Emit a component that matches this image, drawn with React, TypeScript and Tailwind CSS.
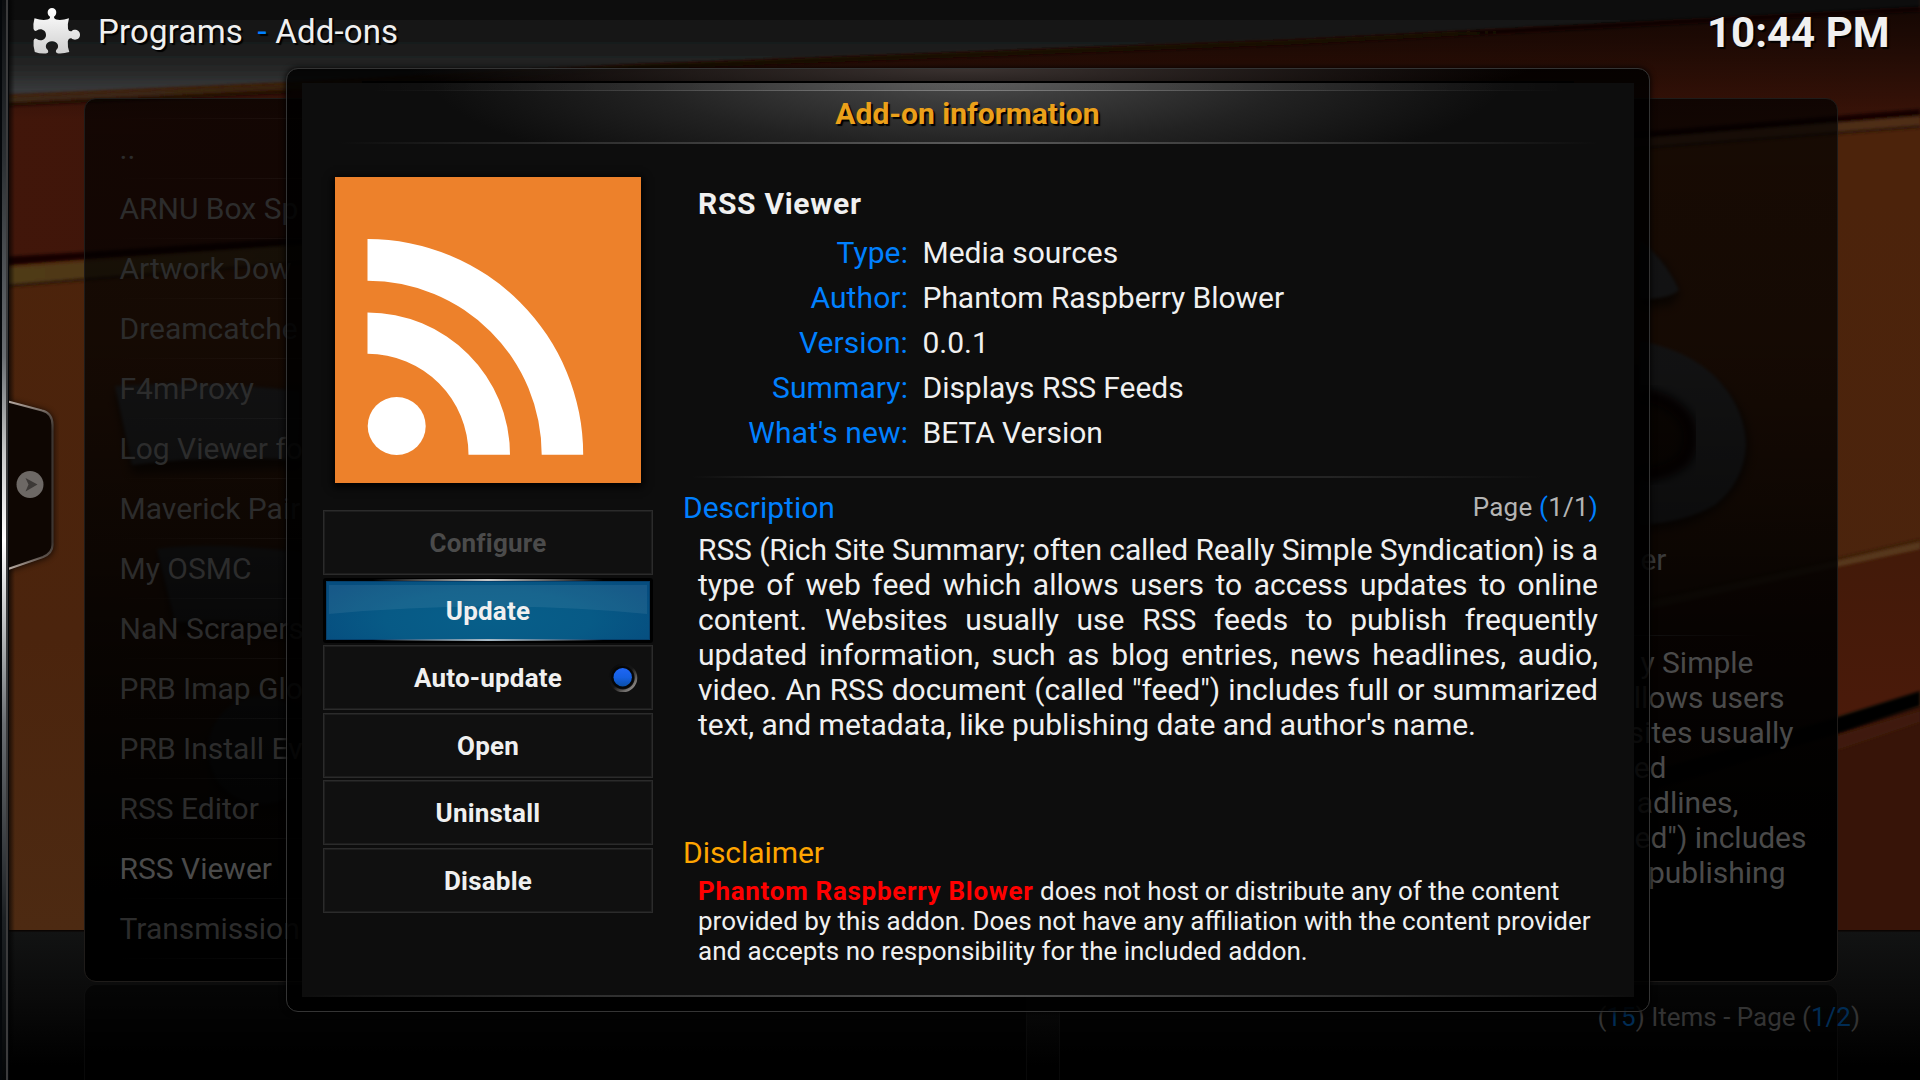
import React from "react";

const addons = [
  "..",
  "ARNU Box Sp",
  "Artwork Dow",
  "Dreamcatche",
  "F4mProxy",
  "Log Viewer fo",
  "Maverick Pair",
  "My OSMC",
  "NaN Scrapers",
  "PRB Imap Glo",
  "PRB Install Ev",
  "RSS Editor",
  "RSS Viewer",
  "Transmission",
];

/* Tail of each synopsis line, with the width of the line up to its last letter. */
const synopsis: [string, string][] = [
  ["y Simple", "w-[694px]"],
  ["llows users", "w-[725px]"],
  ["sites usually", "w-[734px]"],
  ["ed", "w-[607px]"],
  ["adlines,", "w-[679px]"],
  ['ed") includes', "w-[747px]"],
  ["publishing", "w-[726px]"],
];

const fields: [string, string][] = [
  ["Type:", "Media sources"],
  ["Author:", "Phantom Raspberry Blower"],
  ["Version:", "0.0.1"],
  ["Summary:", "Displays RSS Feeds"],
  ["What's new:", "BETA Version"],
];

const description = [
  "RSS (Rich Site Summary; often called Really Simple Syndication) is a",
  "type of web feed which allows users to access updates to online",
  "content. Websites usually use RSS feeds to publish frequently",
  "updated information, such as blog entries, news headlines, audio,",
  'video. An RSS document (called "feed") includes full or summarized',
];

function Wallpaper() {
  return (
    <svg className="absolute inset-0" width="1920" height="1080" viewBox="0 0 1920 1080">
      <defs>
        <linearGradient id="steel" x1="0" y1="0" x2="0" y2="100" gradientUnits="userSpaceOnUse">
          <stop offset="0" stopColor="#0b0b0b" />
          <stop offset="0.35" stopColor="#161616" />
          <stop offset="0.6" stopColor="#202121" />
          <stop offset="0.75" stopColor="#2a2b2b" />
          <stop offset="0.9" stopColor="#37383a" />
          <stop offset="1" stopColor="#2a2c2f" />
        </linearGradient>
        <linearGradient id="redL" x1="0" y1="0" x2="1" y2="0">
          <stop offset="0" stopColor="#41160a" />
          <stop offset="0.65" stopColor="#371207" />
          <stop offset="1" stopColor="#3a1308" />
        </linearGradient>
        <linearGradient id="gold" x1="0" y1="0" x2="1" y2="0">
          <stop offset="0" stopColor="#503a17" />
          <stop offset="0.3" stopColor="#4c3014" />
          <stop offset="0.8" stopColor="#4a2b13" />
          <stop offset="1" stopColor="#4f2d15" />
        </linearGradient>
        <linearGradient id="rim" x1="0" y1="0" x2="1920" y2="0" gradientUnits="userSpaceOnUse">
          <stop offset="0" stopColor="#3b2915" />
          <stop offset="0.15" stopColor="#38230f" />
          <stop offset="0.36" stopColor="#140903" />
          <stop offset="1" stopColor="#100502" />
        </linearGradient>
        <linearGradient id="shade" x1="0" y1="0" x2="0" y2="120" gradientUnits="userSpaceOnUse">
          <stop offset="0" stopColor="#000" stopOpacity="0.85" />
          <stop offset="0.35" stopColor="#000" stopOpacity="0.6" />
          <stop offset="1" stopColor="#000" stopOpacity="0" />
        </linearGradient>
        <linearGradient id="wood" x1="0" y1="200" x2="0" y2="930" gradientUnits="userSpaceOnUse">
          <stop offset="0" stopColor="#4c230b" />
          <stop offset="0.6" stopColor="#4b240d" />
          <stop offset="1" stopColor="#4d2a12" />
        </linearGradient>
        <linearGradient id="redR" x1="0" y1="560" x2="0" y2="720" gradientUnits="userSpaceOnUse">
          <stop offset="0" stopColor="#431a09" />
          <stop offset="1" stopColor="#4a1a0a" />
        </linearGradient>
        <linearGradient id="floor" x1="0" y1="0" x2="0" y2="1">
          <stop offset="0" stopColor="#121313" />
          <stop offset="0.45" stopColor="#0a0a0a" />
          <stop offset="0.9" stopColor="#000" />
        </linearGradient>
        <filter id="soft"><feGaussianBlur stdDeviation="1.6" /></filter>
        <filter id="softer"><feGaussianBlur stdDeviation="4" /></filter>
      </defs>
      <rect width="1920" height="1080" fill="url(#wood)" />
      <polygon points="0,102 290,87 640,66 1280,43 1920,10 1920,118 1650,138 290,246 0,264" fill="url(#redL)" />
      <g filter="url(#soft)">
        <polygon points="0,257 84,252 290,238 1650,131 1920,109 1920,116 1650,138 290,246 84,259 0,266" fill="#140200" />
        <polygon points="0,268 84,262 290,246 1650,138 1920,116 1920,126 1650,147 290,262 84,278 0,286" fill="url(#gold)" />
        <polygon points="0,285 84,278 290,262 1650,146 1920,125 1920,128 1650,149 290,265 84,281 0,288" fill="#2b1507" />
      </g>
      <rect y="0" width="1920" height="120" fill="url(#shade)" opacity="0.8" />
      <polygon points="0,-10 1920,-10 1920,8 1280,40 640,64 290,82 0,95" fill="url(#steel)" filter="url(#soft)" />
      <g filter="url(#soft)" fill="none">
        <path d="M0 100 L290 87 L640 67 L1280 43 L1920 9" stroke="url(#rim)" strokeWidth="5" />
        <path d="M0 105 L290 92" stroke="#1a0804" strokeWidth="3" />
      </g>
      {/* right-hand plank edges */}
      <polygon points="1600,618 1837,566 1920,549 1920,692 1837,716 1600,790" fill="url(#redR)" />
      <polygon points="1600,800 1837,730 1920,706 1920,940 1600,940" fill="#371408" />
      <g filter="url(#soft)">
        <polygon points="1600,612 1837,561 1920,542 1920,549 1837,567 1600,620" fill="#57381c" />
        <path d="M1600 610 L1837 559 L1920 540" stroke="#2e1606" strokeWidth="1.5" fill="none" />
        <polygon points="1600,786 1837,717 1920,691 1920,706 1837,734 1600,806" fill="#020000" />
        <polygon points="1837,736 1920,711 1920,722 1837,750" fill="#45200c" opacity="0.7" />
      </g>
      {/* embossed metal letters */}
      <g filter="url(#softer)" fill="#000" opacity="0.55">
        <path d="M115 392 L165 388 L300 392 L300 468 L132 474 Z" />
        <path d="M158 554 L300 552 L300 640 L176 634 Z" />
        <circle cx="263" cy="758" r="56" />
        <ellipse cx="1652" cy="446" rx="97" ry="84" />
        <path d="M1640 250 L1664 262 L1680 294 L1670 306 L1640 308 Z" />
      </g>
      <g fill="#3f4042" filter="url(#soft)">
        <path d="M115 386 Q200 380 300 391 L300 460 Q210 454 132 465 Z" />
        <path d="M157 549 Q210 542 300 552 L300 626 Q235 618 175 622 Z" />
        <circle cx="262" cy="750" r="54" />
        <path d="M1640 240 L1651 250 Q1668 266 1679 290 Q1670 299 1640 299 Z" />
        <path fillRule="evenodd" d="M1640 341 Q1700 352 1728 392 Q1745 416 1746 445 Q1744 482 1715 505 Q1686 522 1640 525 Z M1640 394 Q1672 398 1687 420 Q1696 442 1684 460 Q1668 474 1640 476 Z" />
      </g>
      <path d="M1640 394 Q1672 398 1687 420 Q1696 442 1684 460 Q1668 474 1640 476" fill="none" stroke="#080401" strokeWidth="14" filter="url(#softer)" />
      <rect y="931" width="1920" height="149" fill="url(#floor)" />
      <rect y="930" width="1920" height="1.5" fill="#0a0503" />
    </svg>
  );
}

function SideHandle() {
  return (
    <svg className="absolute left-0 top-0" width="90" height="1080" viewBox="0 0 90 1080">
      <defs>
        <linearGradient id="chrome" x1="0" y1="0" x2="0" y2="1">
          <stop offset="0" stopColor="#0b0d0f" />
          <stop offset="0.15" stopColor="#2c3033" />
          <stop offset="0.33" stopColor="#6a6e72" />
          <stop offset="0.42" stopColor="#c8caca" />
          <stop offset="0.5" stopColor="#fff" />
          <stop offset="0.57" stopColor="#c4c6c8" />
          <stop offset="0.67" stopColor="#6a6e72" />
          <stop offset="0.85" stopColor="#1c2023" />
          <stop offset="1" stopColor="#040607" />
        </linearGradient>
        <linearGradient id="edge" x1="0" y1="401" x2="0" y2="569" gradientUnits="userSpaceOnUse">
          <stop offset="0" stopColor="#b9aca4" />
          <stop offset="0.08" stopColor="#5d534d" />
          <stop offset="0.18" stopColor="#3c3531" />
          <stop offset="0.84" stopColor="#3c3531" />
          <stop offset="0.93" stopColor="#5d534d" />
          <stop offset="1" stopColor="#b9aca4" />
        </linearGradient>
        <linearGradient id="castX" x1="0" y1="0" x2="1" y2="0">
          <stop offset="0" stopColor="#000" stopOpacity="0.75" />
          <stop offset="1" stopColor="#000" stopOpacity="0" />
        </linearGradient>
        <filter id="cast"><feGaussianBlur stdDeviation="3" /></filter>
      </defs>
      <rect x="8" width="7" height="1080" fill="url(#castX)" />
      <path d="M8 401 L43 410 Q54 413 54 425 V546 Q54 555 44 559 L8 571 Z" fill="#000" opacity="0.7" filter="url(#cast)" />
      <path d="M8 401.5 L42 410.5 Q52.5 413 52.5 425 V545 Q52.5 553 43 557 L8 569" fill="#0e0602" stroke="url(#edge)" strokeWidth="2.2" />
      <circle cx="30" cy="484.5" r="13.5" fill="#6d6865" />
      <path d="M25.5 478 L37.5 484.5 L25.5 491.5 L28.5 484.5 Z" fill="#3d3937" />
      <rect width="9" height="1080" fill="#04070a" />
      <rect x="2" width="4" height="1080" fill="url(#chrome)" />
      <rect x="6" width="2" height="1080" fill="#3b3b3c" />
    </svg>
  );
}

function PuzzleIcon() {
  return (
    <svg width="50" height="50" viewBox="32 6 50 50">
      <defs>
        <linearGradient id="puzzle" x1="0" y1="0" x2="0" y2="1">
          <stop offset="0" stopColor="#fff" />
          <stop offset="1" stopColor="#cfcfcf" />
        </linearGradient>
      </defs>
      <path
        fill="url(#puzzle)"
        d="M34.5 18.3 Q42 20.8 47.5 19.6 Q50.8 18.7 49.8 16.6 C46.2 14 47.4 8 52 8 C56.6 8 57.8 14 54.2 16.6 Q53.4 18.8 56.4 19.6 Q62 20.6 69 18.2 Q67.3 24 68 28.8 Q68.8 32 71.6 31.2 C74 28.4 80 29.8 80 34.7 C80 39.6 74.2 41 71.4 38.2 Q68.6 37.8 67.8 41.4 Q67.4 46.6 69.3 52 Q63.5 53.8 58.2 53.4 Q55 53 56.2 50 C60 47 58 41.2 52 41.2 C46 41.2 44 47 47.8 50 Q49.2 53 46 53.5 Q40 54 34.8 52 Q33 46.6 33.6 40.6 Q34.4 37.4 36.8 39 C40.6 42 46 39.4 46 34.9 C46 30.2 40.6 27.6 36.8 30.6 Q34 31.8 33.5 28.8 Q33 23.6 34.5 18.3 Z"
      />
    </svg>
  );
}

function RssLogo() {
  return (
    <svg className="mx-auto block shadow-[0_2px_8px_2px_#000]" width="306" height="306" viewBox="335 177 306 306">
      <rect x="335" y="177" width="306" height="306" fill="#ed812b" />
      <circle cx="396.7" cy="426" r="29" fill="#fff" />
      <path d="M367.5 312.5 A142.5 142.2 0 0 1 510 454.7 H468.5 A101 101 0 0 0 367.5 353.7 Z" fill="#fff" />
      <path d="M367.5 239 A215.7 215.7 0 0 1 583.2 454.7 H541.7 A174.2 174 0 0 0 367.5 280.7 Z" fill="#fff" />
    </svg>
  );
}

function Toggle() {
  return (
    <svg className="absolute right-[14px] top-[17px]" width="32" height="32" viewBox="0 0 32 32">
      <defs>
        <linearGradient id="ring" x1="0.1" y1="0.1" x2="0.9" y2="0.9">
          <stop offset="0" stopColor="#0b0b0b" />
          <stop offset="0.5" stopColor="#161616" />
          <stop offset="0.85" stopColor="#6d6a68" />
          <stop offset="1" stopColor="#8d8a88" />
        </linearGradient>
        <linearGradient id="bulb" x1="0" y1="0" x2="0" y2="1">
          <stop offset="0" stopColor="#1f66f5" />
          <stop offset="0.5" stopColor="#1560e2" />
          <stop offset="1" stopColor="#0b4fa6" />
        </linearGradient>
      </defs>
      <circle cx="16" cy="15.8" r="13" fill="none" stroke="url(#ring)" strokeWidth="2.6" />
      <circle cx="15.5" cy="15.3" r="11.3" fill="#050607" />
      <circle cx="15.7" cy="15.3" r="9.2" fill="url(#bulb)" />
    </svg>
  );
}

const buttonText = "text-[26px] font-bold leading-[67px] tracking-[0.2px] text-center";

function PlainButton({ label, disabled, children }: { label: string; disabled?: boolean; children?: React.ReactNode }) {
  return (
    <div className={`relative h-[65px] bg-[#101010] shadow-[inset_0_0_0_1px_#2b2b2b,inset_0_0_0_2px_#1d1d1d] ${buttonText} ${disabled ? "text-[#4b4b4b]" : "text-[#f0f0f0]"}`}>
      {label}
      {children}
    </div>
  );
}

function FocusedButton({ label }: { label: string }) {
  return (
    <div className={`relative h-[65px] rounded-[3px] bg-black text-[#f0f0f0] ${buttonText}`}>
      <div className="absolute inset-x-[3px] bottom-[3px] top-[3px] overflow-hidden bg-[radial-gradient(ellipse_58%_90%_at_50%_65%,#075f8a_0%,#075a86_55%,#064d7f_100%)] shadow-[inset_0_0_0_1px_#063f6b]">
        <svg className="block" width="324" height="59" viewBox="0 0 324 59" preserveAspectRatio="none">
          <path d="M3 4 H321 V33 Q162 18 3 33 Z" fill="#fff" opacity="0.07" />
        </svg>
      </div>
      <div className="absolute inset-x-[50px] top-px h-[2px] bg-[linear-gradient(90deg,transparent,#c9c9c9_50%,transparent)]" />
      <div className="absolute inset-x-[50px] bottom-[2px] h-[2px] bg-[linear-gradient(90deg,transparent,#a9bcc9_50%,transparent)]" />
      <span className="relative">{label}</span>
    </div>
  );
}

function Backdrop() {
  return (
    <div className="absolute inset-0 flex flex-col">
      <header className="flex h-[98px] shrink-0 justify-between pl-[32px] pr-[30.5px] text-[#f0f0f0] [text-shadow:2px_2px_1px_#000]">
        <div className="flex text-[33px] leading-[63px]">
          <div className="mr-[16px] pt-[6px]"><PuzzleIcon /></div>
          <span className="tracking-[0.2px]">Programs</span>
          <span className="ml-[14.5px] text-[#0080ff]">-</span>
          <span className="ml-[8.5px] tracking-[0.15px]">Add-ons</span>
        </div>
        <div className="text-[42px] font-bold leading-[65px]">10:44 PM</div>
      </header>

      <main className="flex h-[884px] shrink-0 gap-[32px] pl-[83.5px] pr-[82.5px]">
        <section className="w-[943px] overflow-hidden rounded-[12px] border border-[#1f1c1a] bg-[linear-gradient(180deg,rgba(0,0,0,0.69)_0%,rgba(0,0,0,0.73)_30%,rgba(0,0,0,0.8)_45%,rgba(0,0,0,0.88)_60%,#000_90%)] pt-[19px] text-[30px] leading-[61px]">
          {addons.map((name) => (
            <div key={name} className={`relative h-[60px] whitespace-nowrap pl-[35px] ${name === "RSS Viewer" ? "text-[#4a4a4a]" : "text-[#2c2c2c]"}`}>
              <div className="absolute inset-x-0 top-0 h-px bg-[linear-gradient(90deg,transparent_3%,rgba(255,255,255,0.04)_22%,transparent)]" />
              {name}
            </div>
          ))}
          <div className="h-px bg-[linear-gradient(90deg,transparent_3%,rgba(255,255,255,0.04)_22%,transparent)]" />
        </section>
        <section className="flex w-[779px] flex-col overflow-hidden rounded-[12px] border border-[#1f1c1a] bg-[linear-gradient(180deg,rgba(0,0,0,0.69)_0%,rgba(0,0,0,0.73)_30%,rgba(0,0,0,0.8)_45%,rgba(0,0,0,0.9)_60%,#000_85%)] pt-[442px] text-[30px] text-[#4a4a4a]">
          <div className="w-[607px] text-right leading-[38px] text-[#3a3a3a]">er</div>
          <div className="mt-[56px] h-px shrink-0 bg-[linear-gradient(90deg,#151515_70%,transparent_90%)]" />
          <div className="mt-[9px] whitespace-nowrap leading-[35px]">
            {synopsis.map(([line, width]) => <div key={line} className={`text-right ${width}`}>{line}</div>)}
          </div>
        </section>
      </main>

      <footer className="mt-[2px] flex h-[96px] shrink-0 gap-[32px] pl-[83.5px] pr-[82.5px]">
        <div className="w-[943px] rounded-t-[12px] border border-b-0 border-white/[0.035] bg-[linear-gradient(180deg,rgba(0,0,0,0.5),rgba(0,0,0,0.7))]" />
        <div className="w-[779px] rounded-t-[12px] border border-b-0 border-white/[0.035] bg-[linear-gradient(180deg,rgba(0,0,0,0.5),rgba(0,0,0,0.7))]" />
      </footer>
      <div className="absolute right-[60px] top-[1002px] text-[26px] leading-[30px] text-[#333]">
        (<span className="text-[#012c54]">15</span>) Items - Page (<span className="text-[#012c54]">1/2</span>)
      </div>
    </div>
  );
}

function AddonDialog() {
  return (
    <div className="absolute left-[286px] top-[68px] h-[944px] w-[1364px] rounded-[12px] border border-[#343434] bg-black/85 bg-[radial-gradient(ellipse_560px_40px_at_50%_0,#3a3230_0%,transparent_100%)] px-[15px] py-[14px] shadow-[0_0_6px_#000]">
      <div className="relative h-[914px] bg-[#0d0d0d] text-[#f0f0f0]">
        <div className="absolute inset-x-[60px] top-[-2px] h-[2px] bg-black" />
        <h1 className="relative h-[61px] bg-[radial-gradient(ellipse_540px_120px_at_50%_-10px,#505050_0%,#3b3b3b_25%,#222_60%,#0d0d0d_100%)] pt-px text-center text-[30px] font-bold leading-[60px] text-[#eba01a] [text-shadow:2px_2px_1px_#000]">
          <div className="absolute inset-x-0 top-0 h-[8px] bg-[linear-gradient(90deg,transparent_5%,rgba(255,255,255,0.09)_40%,rgba(255,255,255,0.09)_60%,transparent_95%)]" />
          <div className="absolute inset-x-0 top-[7px] h-px bg-[linear-gradient(90deg,transparent_5%,rgba(255,255,255,0.25)_50%,transparent_95%)]" />
          <div className="absolute inset-x-[36px] bottom-0 h-[2px] bg-[linear-gradient(90deg,transparent,#2c2c2c_18%,#5a5a5a_50%,#2c2c2c_82%,transparent)]" />
          <span className="relative right-[0.5px]">Add-on information</span>
        </h1>

        <div className="flex pl-[21px]">
          <div className="w-[330px] pt-[33px]">
            <RssLogo />
            <div className="mt-[27px] flex flex-col gap-[2.5px]">
              <PlainButton label="Configure" disabled />
              <FocusedButton label="Update" />
              <PlainButton label="Auto-update"><Toggle /></PlainButton>
              <PlainButton label="Open" />
              <PlainButton label="Uninstall" />
              <PlainButton label="Disable" />
            </div>
          </div>

          <div className="ml-[30px] w-[915px] pt-[36.5px] text-[30px]">
            <div className="pl-[15px] leading-[45px]">
              <h2 className="mb-[4px] font-bold tracking-[0.7px]">RSS Viewer</h2>
              {fields.map(([label, value]) => (
                <div key={label} className="flex gap-[14.5px]">
                  <div className="w-[210px] text-right tracking-[0.1px] text-[#0080ff]">{label}</div>
                  <div className="tracking-[-0.04px]">{value}</div>
                </div>
              ))}
            </div>
            <div className="mt-[21.5px] h-[2px] w-[860px] bg-[linear-gradient(90deg,transparent_1%,#242424_12%,#242424_75%,transparent_100%)]" />
            <div className="mt-[7px] flex h-[45px] justify-between leading-[45px]">
              <h3 className="text-[#0080ff]">Description</h3>
              <div className="text-[26px] tracking-[0.2px] text-[#b4b4b4]">
                Page <span className="text-[#0080ff]">(</span>1/1<span className="text-[#0080ff]">)</span>
              </div>
            </div>
            <div className="mt-[2px] whitespace-nowrap pl-[15px] leading-[35px]">
              {description.map((line, i) => (
                <p key={line} className={`[text-align-last:justify] ${i === 0 ? "tracking-[-0.11px]" : "tracking-[-0.03px]"}`}>{line}</p>
              ))}
              <p className="tracking-[-0.04px]">text, and metadata, like publishing date and author's name.</p>
            </div>
            <h3 className="mt-[88px] leading-[45px] tracking-[-0.05px] text-[#ffa500]">Disclaimer</h3>
            <p className="mt-px whitespace-nowrap pl-[15px] text-[26px] leading-[30px]">
              <span className="font-bold tracking-[0.7px] text-[#ff0000]">Phantom Raspberry Blower</span> does not host or
              distribute any of the content
              <br />
              provided by this addon. Does not have any affiliation with the content provider
              <br />
              and accepts no responsibility for the included addon.
            </p>
          </div>
        </div>
        <div className="absolute inset-x-0 bottom-0 h-[2px] bg-[linear-gradient(90deg,transparent,#2c2c2c_20%,#4c4c4c_50%,#2c2c2c_80%,transparent)]" />
      </div>
    </div>
  );
}

export default function App() {
  return (
    <div className="relative h-[1080px] w-[1920px] overflow-hidden bg-black font-['Roboto',sans-serif]">
      <Wallpaper />
      <Backdrop />
      <SideHandle />
      <AddonDialog />
    </div>
  );
}
